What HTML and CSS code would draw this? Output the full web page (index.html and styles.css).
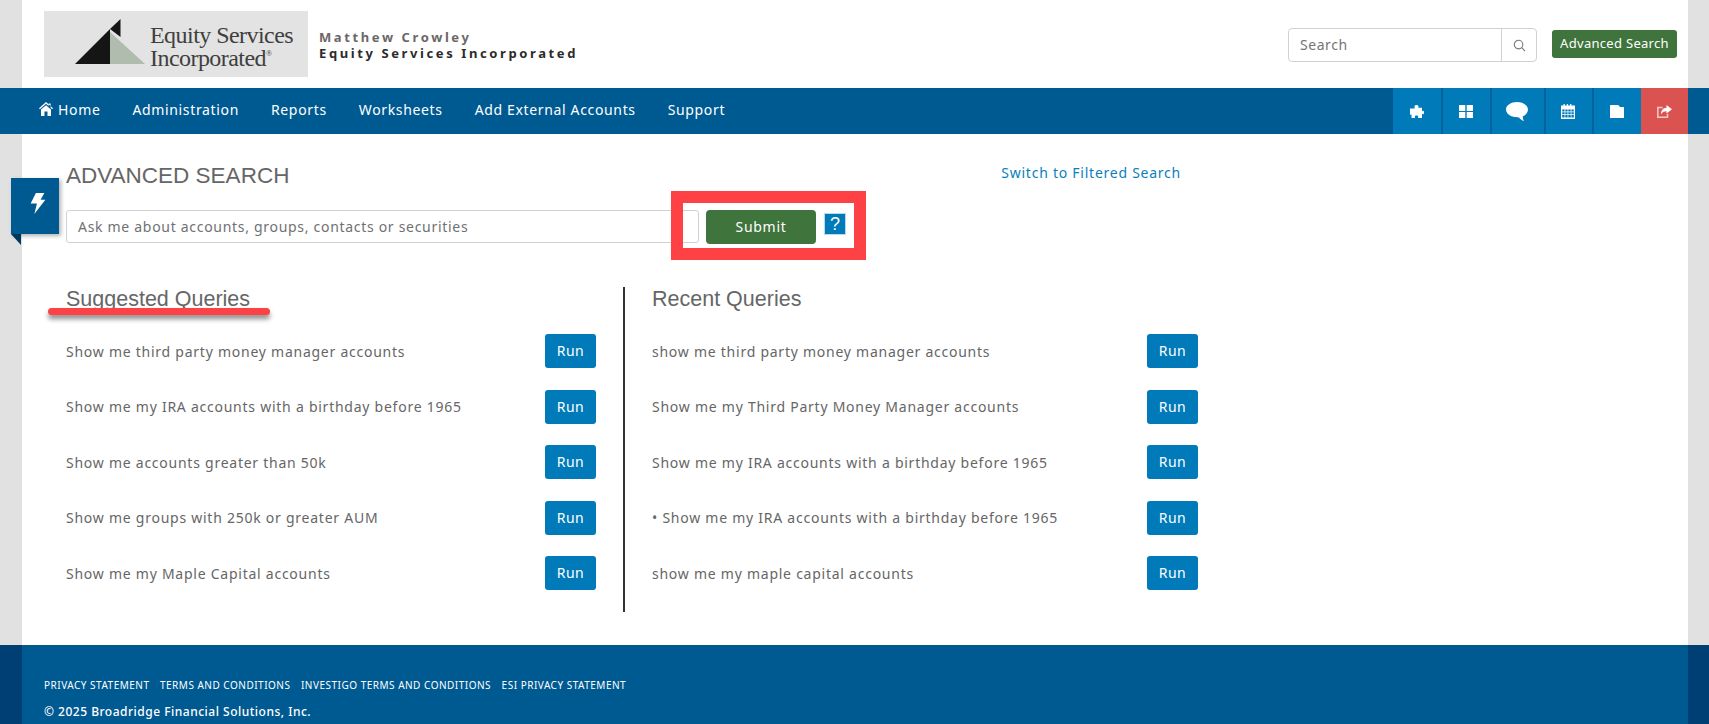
FILE: index.html
```html
<!DOCTYPE html>
<html lang="en">
<head>
<meta charset="utf-8">
<title>Advanced Search</title>
<link rel="stylesheet" href="styles.css">
</head>
<body>
<div class="page">
  <header class="header">
    <div class="brand">
      <div class="logo">
        <svg class="logo-mark" viewBox="0 0 70 45" width="70" height="45"><polygon points="0,45 35,10 35,45" fill="#151515"/><polygon points="35,13 70,45 35,45" fill="#afbcae"/><polygon points="45.500,0 45.500,18 35,10" fill="#151515"/></svg>
        <div class="logo-text"><span>Equity Services</span><span>Incorporated<sup>®</sup></span></div>
      </div>
      <div class="user">
        <div class="user-name">Matthew Crowley</div>
        <div class="user-org">Equity Services Incorporated</div>
      </div>
    </div>
    <div class="header-tools">
      <div class="search">
        <span class="search-text">Search</span>
        <span class="search-icon"><svg viewBox="0 0 14 14" width="13" height="13" fill="none" stroke="#777" stroke-width="1.2"><circle cx="6" cy="6" r="4.6"/><path d="M9.4 9.4 13 13"/></svg></span>
      </div>
      <a class="adv-btn">Advanced Search</a>
    </div>
  </header>
  <nav class="nav">
    <div class="nav-links">
      <a class="nav-link"><svg class="home-icon" viewBox="0 0 14 14" width="14" height="14"><path fill="#fff" d="M7 0 0 6.200l.9 1L7 1.800l2.600 2.300V1.500h2v4.300l1.500 1.400.9-1z"/><path fill="#fff" d="M7 3.200 2 7.600V14h3.500V9.500h3V14H12V7.600z"/></svg>Home</a>
      <a class="nav-link">Administration</a>
      <a class="nav-link">Reports</a>
      <a class="nav-link">Worksheets</a>
      <a class="nav-link">Add External Accounts</a>
      <a class="nav-link">Support</a>
    </div>
    <div class="nav-icons">
      <a class="nav-icon"><svg viewBox="0 0 14 13" width="14" height="13"><path fill="#fff" d="M4.500 1.500C4.500.5 5.500 0 6.500 0s2 .5 2 1.500c0 .5-.3.8-.3 1.200H12v3.500c.4 0 .7-.4 1.200-.4.500 0 .8.8.8 1.700s-.3 1.700-.8 1.700c-.5 0-.8-.4-1.200-.4V13H7.800c0-.5.4-.8.4-1.300 0-.8-.7-1.200-1.700-1.200s-1.700.4-1.700 1.200c0 .5.4.8.4 1.300H1.500V9.500c-.5 0-.8.300-1.200.3L0 9V3.500h4.800c0-.5-.3-.7-.3-2z"/></svg></a>
      <a class="nav-icon"><svg viewBox="0 0 14 13" width="14" height="13"><path fill="#fff" d="M0 0h6.300v6H0zM7.700 0H14v6H7.700zM0 7h6.300v6H0zM7.700 7H14v6H7.700z"/></svg></a>
      <a class="nav-icon nav-icon-wide"><svg viewBox="0 0 22 19" width="22" height="19"><path fill="#fff" d="M11 0C5 0 0 3.300 0 7.600c0 2.900 2.100 5.300 5.400 6.600 3 1 5 1.100 7.600 1.200.9 1.300 2.700 2.900 5.200 3.600-.9-1.100-1.500-2.800-1.400-4.700C20 13 22 10.500 22 7.600 22 3.300 17 0 11 0z"/></svg></a>
      <a class="nav-icon"><svg viewBox="0 0 14 15" width="14" height="15"><path fill="#fff" fill-rule="evenodd" d="M2.500 0h1.300v1.500h2V0h1.300v1.500h2V0h1.300v1.500H14V15H0V1.500h2.500zM1.200 5.500v2h2.400v-2zm3.100 0v2h2.300v-2zm3 0v2h2.400v-2zm3.100 0v2h2.400v-2zM1.200 8.300v2h2.400v-2zm3.100 0v2h2.300v-2zm3 0v2h2.400v-2zm3.100 0v2h2.400v-2zM1.200 11.100v2.500h2.400v-2.500zm3.100 0v2.500h2.300v-2.500zm3 0v2.500h2.400v-2.500zm3.100 0v2.500h2.400v-2.500z"/></svg></a>
      <a class="nav-icon"><svg viewBox="0 0 14 13" width="14" height="13"><path fill="#fff" d="M0 .5A.5.5 0 0 1 .5 0h7.800L10 2h3.500a.5.5 0 0 1 .5.5v10a.5.5 0 0 1-.5.5H.5a.5.5 0 0 1-.5-.5z"/></svg></a>
      <a class="nav-icon nav-icon-red"><svg viewBox="0 0 15 13" width="15" height="13"><path fill="none" stroke="#f6c9c5" stroke-width="1.500" d="M5.500 2.500H.8v9.700h9.700V8.800"/><path fill="#fff" d="M9.500 0 15 4.300 9.500 8.600V6.200C7 6.200 5 7.200 4 9.600c-.2-4 2-6.800 5.500-6.800z"/></svg></a>
    </div>
  </nav>
  <main class="main">
    <div class="flag"><svg viewBox="0 0 14 20" width="18" height="21"><path fill="#fff" d="M5 0h8L9.500 6.500H14L3.500 20 6 10H0z"/></svg></div>
    <div class="title-row">
      <h1 class="title">ADVANCED SEARCH</h1>
      <a class="switch-link">Switch to Filtered Search</a>
    </div>
    <div class="ask-row">
      <div class="ask-input">Ask me about accounts, groups, contacts or securities</div>
      <a class="submit-btn">Submit</a>
      <a class="help-btn">?</a>
      <div class="mark-box"></div>
    </div>
    <div class="queries">
      <section class="col col-left">
        <h2 class="col-title">Suggested Queries</h2>
        <div class="mark-line"></div>
        <div class="row"><span>Show me third party money manager accounts</span><a class="run-btn">Run</a></div>
        <div class="row"><span>Show me my IRA accounts with a birthday before 1965</span><a class="run-btn">Run</a></div>
        <div class="row"><span>Show me accounts greater than 50k</span><a class="run-btn">Run</a></div>
        <div class="row"><span>Show me groups with 250k or greater AUM</span><a class="run-btn">Run</a></div>
        <div class="row"><span>Show me my Maple Capital accounts</span><a class="run-btn">Run</a></div>
      </section>
      <section class="col col-right">
        <h2 class="col-title">Recent Queries</h2>
        <div class="row"><span>show me third party money manager accounts</span><a class="run-btn">Run</a></div>
        <div class="row"><span>Show me my Third Party Money Manager accounts</span><a class="run-btn">Run</a></div>
        <div class="row"><span>Show me my IRA accounts with a birthday before 1965</span><a class="run-btn">Run</a></div>
        <div class="row"><span>• Show me my IRA accounts with a birthday before 1965</span><a class="run-btn">Run</a></div>
        <div class="row"><span>show me my maple capital accounts</span><a class="run-btn">Run</a></div>
      </section>
    </div>
  </main>
  <footer class="footer">
    <div class="footer-inner">
      <div class="footer-links">
        <a>PRIVACY STATEMENT</a>
        <a>TERMS AND CONDITIONS</a>
        <a>INVESTIGO TERMS AND CONDITIONS</a>
        <a>ESI PRIVACY STATEMENT</a>
      </div>
      <div class="copyright">© 2025 Broadridge Financial Solutions, Inc.</div>
    </div>
  </footer>
</div>
</body>
</html>
```
FILE: styles.css
```css
* { box-sizing: border-box; }
html, body { margin: 0; padding: 0; height: 100%; overflow: hidden; }
body { background: #e1e1e1; font-family: "Noto Sans", "Open Sans", sans-serif; font-size: 14px; color: #626262; }
.page { width: 1709px; height: 724px; display: flex; flex-direction: column; }
h1, h2 { margin: 0; font-weight: 400; }

.header { height: 88px; margin: 0 21px 0 22px; padding: 0 11px 0 22px; background: #fff; display: flex; justify-content: space-between; }
.brand { display: flex; align-items: flex-start; }
.logo { width: 264px; height: 66px; margin-top: 11px; background: #e3e3e3; display: flex; align-items: flex-end; padding: 0 0 13px 31px; }
.logo-mark { display: block; margin-right: 5px; }
.logo-text { display: flex; flex-direction: column; font-family: "Liberation Serif", serif; font-size: 24px; line-height: 23px; color: #3f3f3f; letter-spacing: -.55px; margin-bottom: -6px; }
.logo-text sup { font-size: 8px; line-height: 0; vertical-align: 10px; }
.user { margin: 29px 0 0 11px; font-weight: 700; font-size: 13px; line-height: 16px; letter-spacing: 2.6px; }
.user-name { color: #6c6766; }
.user-org { color: #2b2b2b; }
.header-tools { display: flex; align-items: flex-start; }
.search { width: 249px; height: 34px; margin-top: 28px; border: 1px solid #cfd2d4; border-radius: 4px; display: flex; justify-content: space-between; background: #fff; }
.search-text { padding-left: 11px; line-height: 32px; color: #757575; letter-spacing: .55px; }
.search-icon { width: 35px; border-left: 1px solid #cfd2d4; display: flex; align-items: center; justify-content: center; }
.adv-btn { width: 125px; height: 28px; margin: 30px 0 0 15px; background: #3f743c; color: #fff; border-radius: 3px; font-size: 13px; line-height: 26px; text-align: center; letter-spacing: .3px; }

.nav { height: 46px; background: #005a92; display: flex; justify-content: space-between; padding: 0 21px 0 38px; }
.nav-links { display: flex; gap: 32px; align-items: center; }
.nav-link { color: #fff; font-size: 14px; letter-spacing: .65px; display: flex; align-items: center; margin-top: -3px; }
.home-icon { margin-left: 1px; margin-right: 5px; margin-top: -1px; }
.nav-icons { display: flex; }
.nav-icon { width: 48px; background: #007ab8; box-shadow: inset 2px 0 0 #00639c; display: flex; align-items: center; justify-content: center; }
.nav-icon:first-child { box-shadow: none; }
.nav-icon:nth-child(2), .nav-icon:nth-child(5) { width: 49px; }
.nav-icon-wide { width: 54px; }
.nav-icon-red { width: 47px; background: #db5350; box-shadow: none; }

.main { position: relative; flex: 1; margin: 0 21px 0 22px; padding: 26px 0 0 44px; background: #fff; }
.flag { position: absolute; left: -11px; top: 44px; width: 48px; height: 56px; background: #005a92; box-shadow: 2px 2px 4px rgba(0,0,0,.3); display: flex; align-items: center; justify-content: center; padding: 0 0 5px 5px; }
.flag::after { content: ""; position: absolute; left: 0; top: 56px; border-top: 11px solid #00385e; border-left: 10px solid transparent; }
.title-row { width: 1115px; height: 30px; display: flex; justify-content: space-between; align-items: center; }
.title { font-family: "Liberation Sans", sans-serif; font-size: 22.500px; line-height: 30px; color: #666; padding-top: 1px; }
.switch-link { color: #0a7fbd; letter-spacing: .75px; margin-top: -6px; }
.ask-row { position: relative; display: flex; margin-top: 20px; align-items: flex-start; }
.ask-input { width: 633px; height: 33px; border: 1px solid #cfd2d4; border-radius: 3px; padding-left: 11px; line-height: 31px; color: #6f7174; letter-spacing: .7px; }
.submit-btn { width: 110px; height: 34px; margin-left: 7px; background: #3f743c; color: #fff; border-radius: 4px; text-align: center; line-height: 33px; letter-spacing: .7px; }
.help-btn { width: 22px; height: 22px; margin: 3px 0 0 8px; background: #007ab8; border: 1px solid #b9d9ec; color: #fff; font-family: "Liberation Sans", sans-serif; font-size: 18px; line-height: 20px; text-align: center; }
.mark-box { position: absolute; left: 605px; top: -19px; width: 195px; height: 69px; border: 12px solid #fe4144; pointer-events: none; }

.queries { display: flex; margin-top: 43px; }
.col { position: relative; }
.col-left { width: 559px; padding-right: 27px; border-right: 2px solid #333; height: 325px; }
.col-right { width: 573px; padding-left: 27px; }
.col-title { font-family: "Liberation Sans", sans-serif; font-size: 21.500px; line-height: 24px; color: #666; margin-bottom: 23px; }
.mark-line { position: absolute; left: -18px; top: 21px; width: 222px; height: 7px; background: #fe4144; border-radius: 4px; box-shadow: 0 4px 5px rgba(0,0,0,.45); }
.row { display: flex; justify-content: space-between; align-items: center; height: 34px; margin-bottom: 21.500px; letter-spacing: .75px; color: #666; }
.run-btn { width: 51px; height: 34px; background: #007ab8; color: #fff; border-radius: 3px; text-align: center; line-height: 33px; letter-spacing: .5px; }

.footer { height: 79px; background: #003f74; padding: 0 21px 0 22px; }
.footer-inner { height: 100%; background: #005a92; padding: 33px 0 0 22px; color: #fff; }
.footer-links { display: flex; gap: 10.500px; font-size: 10px; line-height: 14px; letter-spacing: .5px; }
.copyright { margin-top: 11px; font-size: 12px; font-weight: 500; line-height: 18px; letter-spacing: .5px; }
```
